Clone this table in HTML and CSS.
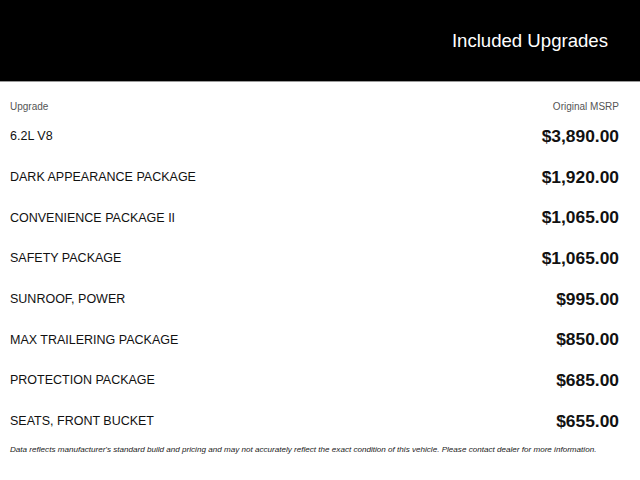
FILE: index.html
```html
<!DOCTYPE html>
<html>
<head>
<meta charset="utf-8">
<link rel="stylesheet" href="styles.css">
</head>
<body>
<header class="banner">
  <h1 class="title">Included Upgrades</h1>
</header>
<section class="table">
  <div class="head">
    <span>Upgrade</span>
    <span>Original MSRP</span>
  </div>
  <div class="row"><span class="name">6.2L V8</span><span class="price">$3,890.00</span></div>
  <div class="row"><span class="name">DARK APPEARANCE PACKAGE</span><span class="price">$1,920.00</span></div>
  <div class="row"><span class="name">CONVENIENCE PACKAGE II</span><span class="price">$1,065.00</span></div>
  <div class="row"><span class="name">SAFETY PACKAGE</span><span class="price">$1,065.00</span></div>
  <div class="row"><span class="name">SUNROOF, POWER</span><span class="price">$995.00</span></div>
  <div class="row"><span class="name">MAX TRAILERING PACKAGE</span><span class="price">$850.00</span></div>
  <div class="row"><span class="name">PROTECTION PACKAGE</span><span class="price">$685.00</span></div>
  <div class="row"><span class="name">SEATS, FRONT BUCKET</span><span class="price">$655.00</span></div>
  <p class="note">Data reflects manufacturer's standard build and pricing and may not accurately reflect the exact condition of this vehicle. Please contact dealer for more information.</p>
</section>
</body>
</html>
```
FILE: styles.css
```css
html, body {
  margin: 0;
  padding: 0;
  background: #fff;
  font-family: "Liberation Sans", Arial, sans-serif;
}
.banner {
  height: 81px;
  background: #000;
  border-bottom: 1px solid #9a9a9a;
  display: flex;
  align-items: center;
  justify-content: flex-end;
  padding-right: 32px;
}
.title {
  margin: 0;
  color: #fff;
  font-weight: normal;
  font-size: 18.6px;
  line-height: 22px;
}
.table {
  padding: 0 21px 0 10px;
}
.head {
  display: flex;
  justify-content: space-between;
  align-items: flex-start;
  font-size: 10px;
  line-height: 12px;
  color: #555;
  height: 34px;
  box-sizing: border-box;
  padding-top: 19px;
}
.row {
  display: flex;
  justify-content: space-between;
  align-items: center;
  height: 40.7px;
}
.name {
  font-size: 12.5px;
  color: #111;
}
.price {
  font-size: 17.4px;
  font-weight: bold;
  color: #111;
}
.note {
  margin: 0;
  padding-top: 2px;
  font-size: 8.1px;
  line-height: 11px;
  font-style: italic;
  color: #222;
  white-space: nowrap;
}
```
